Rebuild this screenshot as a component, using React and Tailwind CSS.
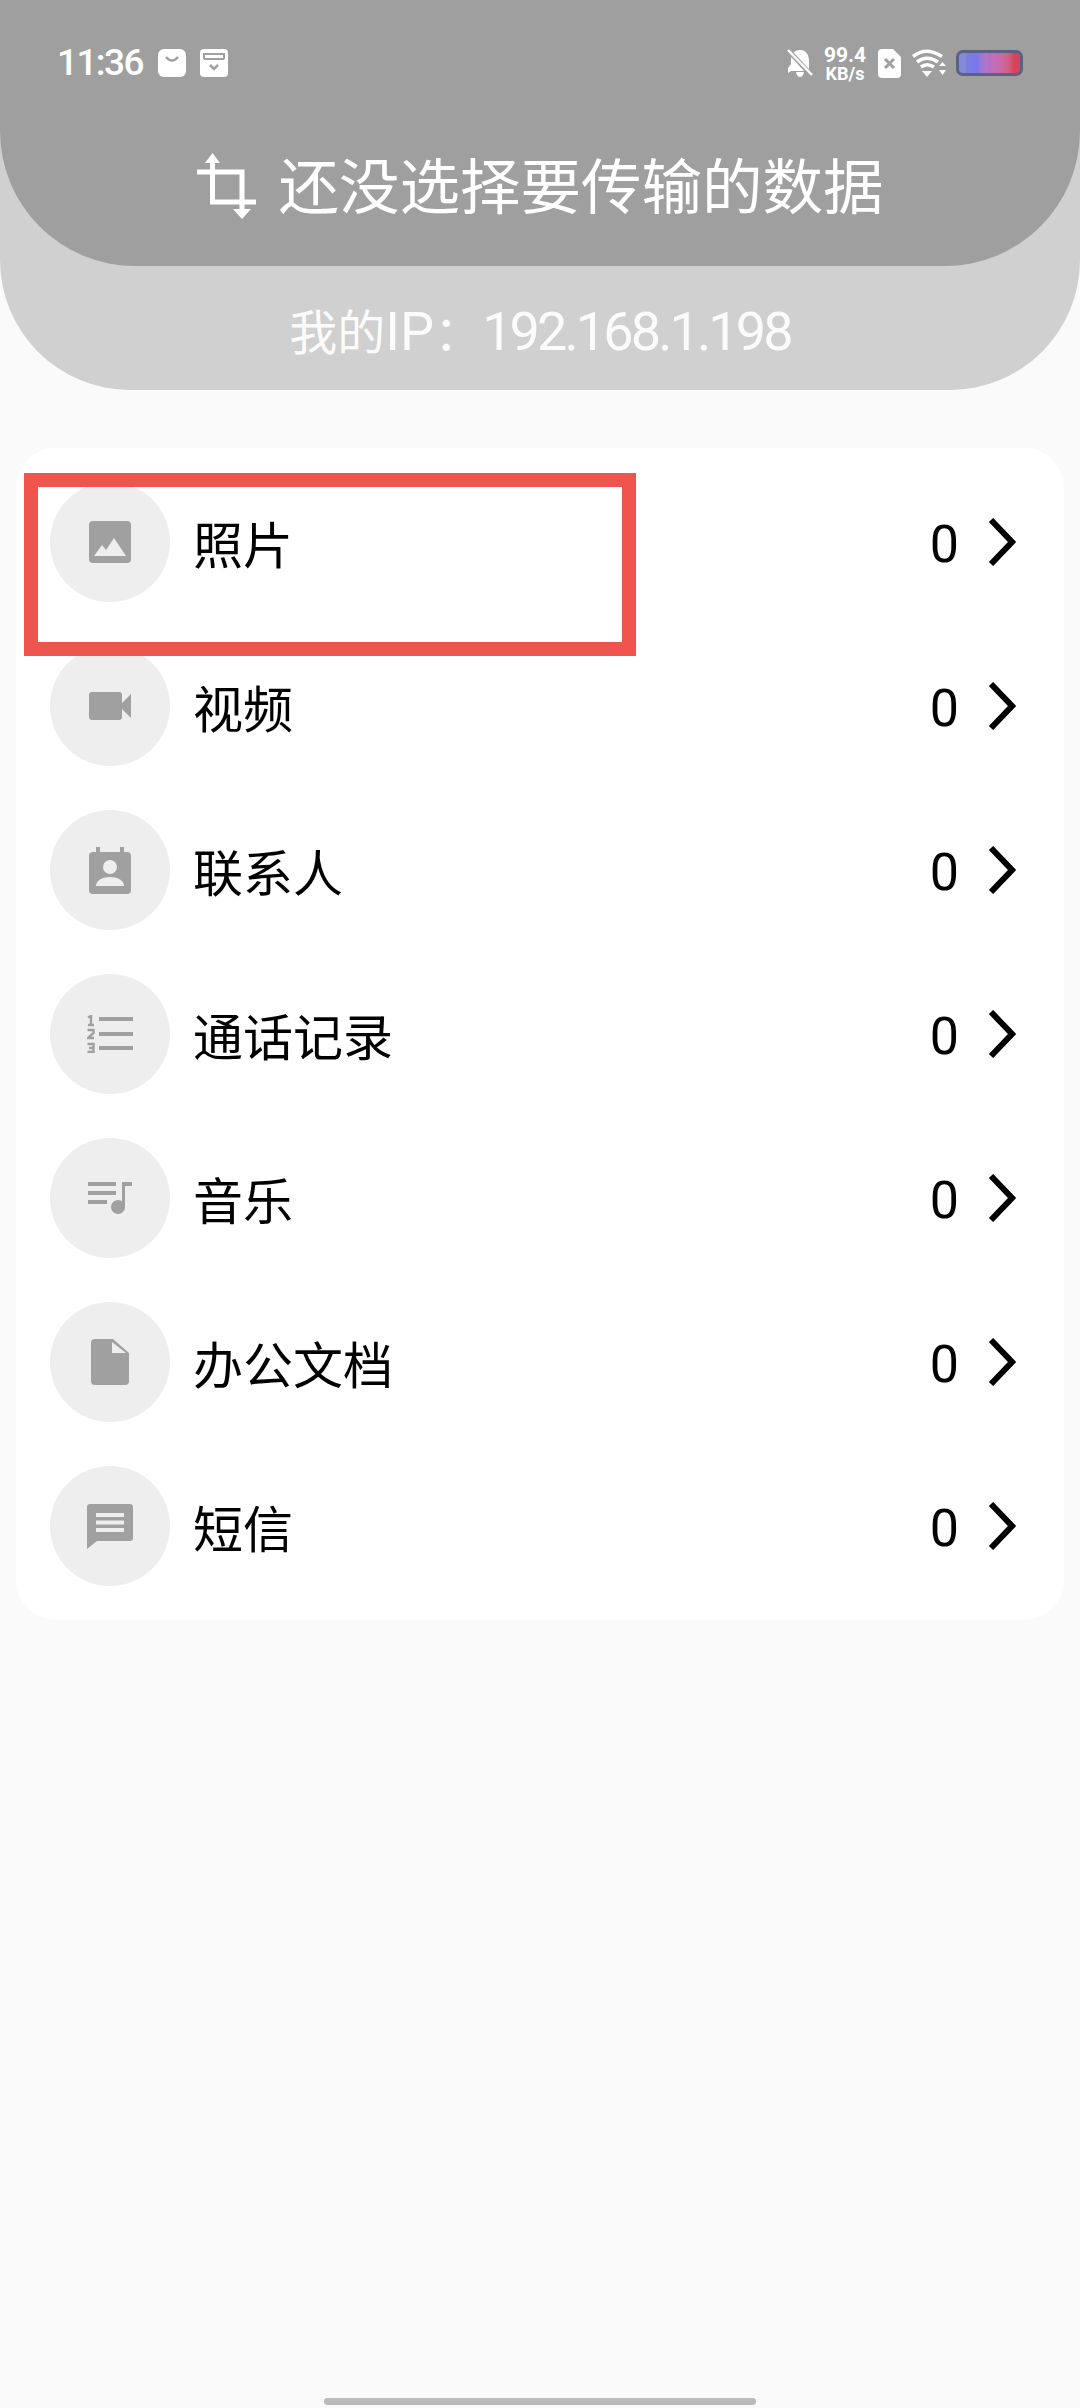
const GREY = "#a0a0a0";

function PhotoIcon() {
  return (
    <svg width="42" height="42" viewBox="0 0 42 42">
      <rect width="42" height="42" rx="4" fill={GREY} />
      <path d="M5 35 L13 24 L17 29 L25 17 L37 35 Z" fill="#eeeeee" />
    </svg>
  );
}

function VideoIcon() {
  return (
    <svg width="42" height="28" viewBox="0 0 42 28">
      <rect width="33" height="28" rx="3" fill={GREY} />
      <path d="M32 12 L42 2 V26 L32 16 Z" fill={GREY} />
    </svg>
  );
}

function ContactIcon() {
  return (
    <svg width="42" height="47" viewBox="0 0 42 47">
      <rect x="7" y="0" width="4" height="8" fill={GREY} />
      <rect x="31" y="0" width="4" height="8" fill={GREY} />
      <rect y="5" width="42" height="42" rx="4" fill={GREY} />
      <circle cx="21" cy="20" r="7" fill="#eeeeee" />
      <path d="M7 39 C7 33 14 30 21 30 C28 30 35 33 35 39 Z" fill="#eeeeee" />
    </svg>
  );
}

function NumberListIcon() {
  return (
    <svg width="46" height="38" viewBox="0 0 46 38">
      <path d="M1 2.5 L4 1 V10 M1 10 H7 M0.5 15 H6.5 V18 L1 23 H7 M0.5 29 H6.5 V37 H0.5 M2 33 H6.5" fill="none" stroke={GREY} strokeWidth="2.4" />
      <rect x="12" y="2" width="34" height="4" fill={GREY} />
      <rect x="12" y="17" width="34" height="4" fill={GREY} />
      <rect x="12" y="31" width="34" height="4" fill={GREY} />
    </svg>
  );
}

function MusicIcon() {
  return (
    <svg width="44" height="32" viewBox="0 0 44 32">
      <rect y="0" width="28" height="4" fill={GREY} />
      <rect y="9" width="28" height="4" fill={GREY} />
      <rect y="18" width="19" height="4" fill={GREY} />
      <circle cx="30" cy="25" r="7" fill={GREY} />
      <path d="M34 25 V0 H44 V4 H37 V25 Z" fill={GREY} />
    </svg>
  );
}

function DocIcon() {
  return (
    <svg width="38" height="46" viewBox="0 0 38 46">
      <path d="M4 0 H22 L38 14 V42 Q38 46 34 46 H4 Q0 46 0 42 V4 Q0 0 4 0 Z" fill={GREY} />
      <path d="M21 3 L35 14 H21 Z" fill="#eeeeee" />
    </svg>
  );
}

function SmsIcon() {
  return (
    <svg width="46" height="45" viewBox="0 0 46 45">
      <path d="M3 0 H43 Q46 0 46 3 V34 Q46 37 43 37 H10 L0 45 V3 Q0 0 3 0 Z" fill={GREY} />
      <rect x="9" y="9" width="28" height="4" fill="#eeeeee" />
      <rect x="9" y="16.5" width="28" height="4" fill="#eeeeee" />
      <rect x="9" y="24" width="28" height="4" fill="#eeeeee" />
    </svg>
  );
}

function Chevron() {
  return (
    <svg width="28" height="48" viewBox="0 0 28 48">
      <path d="M3 2 L24 24 L3 46" fill="none" stroke="#000" strokeWidth="6" />
    </svg>
  );
}

function TransferIcon() {
  return (
    <svg width="60" height="68" viewBox="198 150 60 68">
      <path d="M198 170 H243 V208 M213.5 160 V200 H257" fill="none" stroke="#fff" strokeWidth="5" />
      <path d="M213.5 151 L221 161 H206 Z M243 217 L234 207 H252 Z" fill="#fff" />
    </svg>
  );
}

const rows = [
  { name: "照片", icon: <PhotoIcon /> },
  { name: "视频", icon: <VideoIcon /> },
  { name: "联系人", icon: <ContactIcon /> },
  { name: "通话记录", icon: <NumberListIcon /> },
  { name: "音乐", icon: <MusicIcon /> },
  { name: "办公文档", icon: <DocIcon /> },
  { name: "短信", icon: <SmsIcon /> },
];

function StatusBar() {
  return (
    <div className="flex h-[126px] items-center justify-between px-[57px] text-white">
      <div className="flex items-center">
        <span className="w-[101px] font-['Roboto',sans-serif] text-[37px] font-medium tracking-[-1.6px]">11:36</span>
        <svg width="28" height="28" viewBox="0 0 28 28" className="mr-[14px]">
          <rect width="28" height="28" rx="6" fill="#fff" />
          <path d="M8 8 Q14 15 20 8" fill="none" stroke={GREY} strokeWidth="2.5" />
        </svg>
        <svg width="28" height="28" viewBox="0 0 28 28">
          <rect width="28" height="28" rx="4" fill="#fff" />
          <path d="M4 10 V5 H24 V10" fill="none" stroke={GREY} strokeWidth="2" />
          <rect x="4" y="9" width="20" height="2" fill={GREY} />
          <path d="M10 16 L14 20 L18 16" fill="none" stroke={GREY} strokeWidth="2.5" />
        </svg>
      </div>
      <div className="flex items-center">
        <svg width="26" height="28" viewBox="0 0 26 28" className="mr-[10px]">
          <path d="M13 1 C20 1 22 7 22 12 V22 H4 L1 24 V19 L4 15 V10 C4 6 7 1 13 1 Z M9 23 H17 Q16 28 13 28 Q10 28 9 23 Z" fill="#fff" />
          <path d="M1 1 L25 27" stroke={GREY} strokeWidth="5" />
          <path d="M1 1 L25 26" stroke="#fff" strokeWidth="2.5" />
        </svg>
        <div className="mr-[11px] flex w-[44px] flex-col items-center font-['Roboto',sans-serif] font-bold">
          <span className="text-[21px] leading-[20px]">99.4</span>
          <span className="text-[18px] leading-[17px]">KB/s</span>
        </div>
        <svg width="23" height="29" viewBox="0 0 23 29" className="mr-[11px]">
          <path d="M4 0 H15 L23 8 V25 Q23 29 19 29 H4 Q0 29 0 25 V4 Q0 0 4 0 Z" fill="#fff" />
          <path d="M7 10 L16 19 M16 10 L7 19" stroke={GREY} strokeWidth="3" />
        </svg>
        <svg width="34" height="28" viewBox="0 0 34 28" className="mr-[10px]">
          <path d="M1 7.5 Q14 -3 30 7.5 M5 13 Q15 5.5 26 13 M9 18 Q15 13.5 22 18" fill="none" stroke="#fff" strokeWidth="3.6" />
          <path d="M10 22 L20 22 L15 28 Z" fill="#fff" />
          <path d="M27 17 L30.5 13 L34 17 Z M27 21 L34 21 L30.5 26 Z" fill="#fff" />
        </svg>
        <div className="h-[26px] w-[67px] rounded-[7px] border-[3px] border-[#5c6184] bg-[linear-gradient(90deg,#8489d8_0%,#8489d8_10%,#777ee0_14%,#7a78ea_30%,#9c76da_36%,#b872ca_46%,#ae70c6_50%,#c46eba_54%,#c26ab2_64%,#ce689e_70%,#ca648a_80%,#d65872_84%,#d6445c_90%,#d6445c_100%)]" />
      </div>
    </div>
  );
}

export default function App() {
  return (
    <div className="flex h-[2408px] flex-col bg-[#fafafa] font-['Noto_Sans_CJK_SC',sans-serif]">
      <div className="h-[390px] rounded-b-[130px] bg-[#d0d0d0]">
        <div className="h-[266px] rounded-b-[135px] bg-[#9f9f9f]">
          <StatusBar />
          <div className="flex h-[120px] items-center justify-center text-white">
            <TransferIcon />
            <span className="mb-[5px] ml-[22px] text-[60.5px] leading-none font-normal">还没选择要传输的数据</span>
          </div>
        </div>
        <div className="flex h-[124px] items-center justify-center pt-[8px] text-[#fbfbfb]">
          <p className="text-[48px] leading-none font-normal">
            我的
            <span className="font-['Roboto',sans-serif] text-[54px] font-normal">IP</span>：
            <span className="font-['Roboto',sans-serif] text-[54px] font-normal tracking-[-2.9px]">192.168.1.198</span>
          </p>
        </div>
      </div>

      <div className="relative mx-4 mt-[58px] rounded-[40px] bg-white py-3">
        {rows.map((row) => (
          <div key={row.name} className="flex h-[164px] items-center pr-[48px] pl-[34px]">
            <div className="flex h-[120px] w-[120px] items-center justify-center rounded-full bg-[#eeeeee]">
              {row.icon}
            </div>
            <span className="ml-[23px] flex-1 text-[50px] leading-none text-black">{row.name}</span>
            <span className="mt-[6px] mr-[29px] font-['Roboto',sans-serif] text-[52px] leading-none font-normal text-black">0</span>
            <Chevron />
          </div>
        ))}
        <div className="absolute top-[25px] left-[8px] h-[183px] w-[612px] border-[14px] border-[#f0544f]" />
      </div>

      <div className="mx-auto mt-auto mb-[3px] h-[7px] w-[432px] rounded-full bg-[#bbbbbb]" />
    </div>
  );
}
